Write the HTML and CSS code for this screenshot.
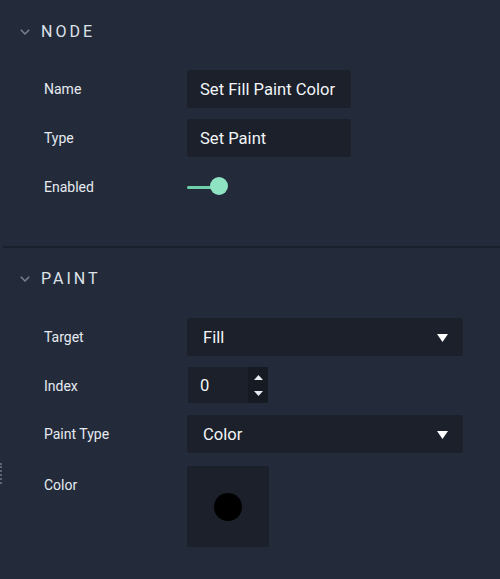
FILE: index.html
```html
<!DOCTYPE html>
<html>
<head>
<meta charset="utf-8">
<link rel="stylesheet" href="styles.css">
</head>
<body>
<div class="panel">
  <section class="section node">
    <div class="head">
      <svg class="chev" width="10" height="6" viewBox="0 0 10 6"><path d="M0.8 0.8 L5 5 L9.2 0.8" fill="none" stroke="#7d8591" stroke-width="1.4"/></svg>
      <span class="title">NODE</span>
    </div>
    <div class="rows">
      <div class="row"><div class="label">Name</div><div class="input w164">Set Fill Paint Color</div></div>
      <div class="row"><div class="label">Type</div><div class="input w164">Set Paint</div></div>
      <div class="row"><div class="label">Enabled</div>
        <div class="toggle"><span class="track"></span><span class="knob"></span></div>
      </div>
    </div>
  </section>
  <div class="divider"></div>
  <section class="section paint">
    <div class="head">
      <svg class="chev" width="10" height="6" viewBox="0 0 10 6"><path d="M0.8 0.8 L5 5 L9.2 0.8" fill="none" stroke="#7d8591" stroke-width="1.4"/></svg>
      <span class="title">PAINT</span>
    </div>
    <div class="rows">
      <div class="row"><div class="label">Target</div>
        <div class="input select">Fill<svg class="caret" width="11" height="8" viewBox="0 0 11 8"><path d="M0 0 H11 L5.5 8 Z" fill="#ffffff"/></svg></div>
      </div>
      <div class="row r-index"><div class="label">Index</div>
        <div class="number"><span class="num">0</span>
          <span class="spin">
            <svg width="9" height="5" viewBox="0 0 9 5"><path d="M0 5 L4.5 0 L9 5 Z" fill="#e8ecf1"/></svg>
            <svg width="9" height="5" viewBox="0 0 9 5"><path d="M0 0 L9 0 L4.5 5 Z" fill="#e8ecf1"/></svg>
          </span>
        </div>
      </div>
      <div class="row"><div class="label">Paint Type</div>
        <div class="input select">Color<svg class="caret" width="11" height="8" viewBox="0 0 11 8"><path d="M0 0 H11 L5.5 8 Z" fill="#ffffff"/></svg></div>
      </div>
      <div class="row r-color"><div class="label">Color</div>
        <div class="swatch"><span class="dot"></span></div>
      </div>
    </div>
  </section>
  <div class="handle"></div>
</div>
</body>
</html>
```
FILE: styles.css
```css
* { box-sizing: border-box; }
html, body {
  margin: 0;
  padding: 0;
  background: #232b3b;
  font-family: Roboto, "Liberation Sans", sans-serif;
  color: #e6eaf0;
  width: 500px;
  height: 579px;
  overflow: hidden;
}
.panel {
  position: relative;
  height: 579px;
}
.section {
  display: flex;
  flex-direction: column;
}
.node { padding-top: 21px; padding-bottom: 40px; }
.paint { padding-top: 20px; }
.head {
  display: flex;
  align-items: center;
  height: 20px;
  padding-left: 20px;
}
.chev { margin-right: 11px; margin-top: 2px; }
.title {
  font-size: 16px;
  letter-spacing: 3px;
  color: #dde2e9;
}
.node .rows { margin-top: 29px; }
.paint .rows { margin-top: 30px; }
.rows {
  display: flex;
  flex-direction: column;
  gap: 11px;
}
.row {
  display: flex;
  align-items: center;
  height: 38px;
}
.label {
  width: 187px;
  padding-left: 44px;
  font-size: 14px;
  color: #e6eaf0;
}
.input {
  height: 38px;
  background: #1b202a;
  border-radius: 3px;
  padding-left: 13px;
  font-size: 16.6px;
  color: #f2f4f7;
  display: flex;
  align-items: center;
}
.w164 { width: 164px; }
.select {
  width: 276px;
  padding-left: 16px;
  justify-content: space-between;
  padding-right: 15px;
}
.caret { margin-top: 1px; }
.toggle {
  position: relative;
  width: 42px;
  height: 18px;
  display: flex;
  align-items: center;
}
.track {
  display: block;
  width: 28px;
  height: 3px;
  background: #6fcfa9;
  border-radius: 2px;
}
.knob {
  position: absolute;
  left: 23px;
  top: -1px;
  width: 18px;
  height: 18px;
  border-radius: 50%;
  background: #8ee3c2;
}
.r-index { height: 37px; }
.number {
  display: flex;
  align-self: flex-start;
  width: 80px;
  height: 36px;
  margin-left: 1px;
  background: #1b202a;
  border-radius: 2px;
  overflow: hidden;
}
.num {
  flex: 1;
  display: flex;
  align-items: center;
  padding-left: 12px;
  font-size: 16.6px;
  color: #f2f4f7;
}
.spin {
  width: 20px;
  background: #151a23;
  display: flex;
  flex-direction: column;
  align-items: center;
  justify-content: space-between;
  padding: 8px 0 7px;
}
.r-color {
  height: 81px;
  align-items: flex-start;
  margin-top: 2px;
}
.r-color .label { line-height: 38px; }
.swatch {
  width: 82px;
  height: 81px;
  background: #1b202a;
  border-radius: 3px;
  display: flex;
  align-items: center;
  justify-content: center;
}
.dot {
  width: 28px;
  height: 28px;
  border-radius: 50%;
  background: #000;
  margin-top: 1px;
}
.divider {
  height: 2px;
  margin-left: 3px;
  background: #1a202b;
}
.handle {
  position: absolute;
  left: 0;
  top: 463px;
  width: 2px;
  height: 21px;
  border-left: 2px dotted #5d6676;
}
```
